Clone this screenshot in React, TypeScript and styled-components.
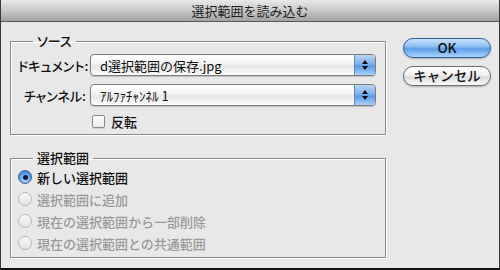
import * as React from "react";
import styled, { createGlobalStyle } from "styled-components";

const GlobalStyle = createGlobalStyle`
  html, body { margin: 0; padding: 0; background: #e8e8e8; }
  body {
    font-family: "Noto Sans CJK JP", "Noto Sans", sans-serif;
    font-feature-settings: "palt";
  }
`;

const Window = styled.div`
  width: 500px;
  height: 270px;
  box-sizing: border-box;
  background: #e8e8e8;
  border-left: 1px solid #3a3a3a;
  border-right: 1px solid #3a3a3a;
  border-bottom: 2px solid #111;
  display: flex;
  flex-direction: column;
  color: #111;
  font-size: 13px;
`;

const TitleBar = styled.div`
  height: 21px;
  flex-shrink: 0;
  background: linear-gradient(#e9e9e9, #c8c8c8 50%, #a2a2a2);
  border-bottom: 1px solid #5a5a5a;
  display: flex;
  align-items: center;
  justify-content: center;
  font-size: 13px;
  color: #1e1e1e;
  line-height: 1;
  font-feature-settings: normal;
`;

const Body = styled.div`
  display: flex;
  padding: 11px 0 0 9px;
  gap: 17px;
`;

const LeftColumn = styled.div`
  width: 376px;
  display: flex;
  flex-direction: column;
  gap: 15px;
`;

const GroupBox = styled.fieldset<{ $bottom: number }>`
  margin: 0;
  padding: 5px 8px ${p => p.$bottom}px 7px;
  border: 1px solid #8a8a8a;
  box-shadow: 1px 1px 0 #fff, inset 1px 1px 0 #fff;
  min-width: 0;
`;

const GroupLegend = styled.legend`
  margin-left: 15px;
  padding: 0 4px;
  font-size: 13px;
  line-height: 16px;
  font-weight: 500;
`;

const FormGrid = styled.div`
  display: grid;
  grid-template-columns: 68px 286px;
  column-gap: 4px;
  row-gap: 8px;
  align-items: center;
`;

const FieldLabel = styled.div`
  text-align: right;
  white-space: nowrap;
  font-weight: 500;
`;

const PopupBox = styled.div`
  height: 22px;
  box-sizing: border-box;
  border: 1px solid #7c7c7c;
  border-radius: 4px;
  background: linear-gradient(#ffffff, #f3f3f3 45%, #e6e6e6 55%, #fdfdfd);
  box-shadow: 0 1px 1px rgba(0, 0, 0, 0.18);
  display: flex;
  align-items: stretch;
  overflow: hidden;
`;

const PopupValue = styled.div`
  flex: 1;
  display: flex;
  align-items: center;
  padding-left: 9px;
  font-size: 13px;
  font-feature-settings: normal;
  white-space: nowrap;
`;

const Stepper = styled.div`
  width: 20px;
  border-left: 1px solid #5f87b8;
  background: linear-gradient(#b7d5f5, #7fb0ea 45%, #5d98e4 55%, #a9d2fb);
  display: flex;
  flex-direction: column;
  align-items: center;
  justify-content: center;
  gap: 2px;
`;

const StepArrow = styled.div<{ $down?: boolean }>`
  width: 0;
  height: 0;
  border-left: 3px solid transparent;
  border-right: 3px solid transparent;
  ${p => (p.$down ? "border-top: 4px solid #111;" : "border-bottom: 4px solid #111;")}
`;

const CheckRow = styled.label`
  grid-column: 2;
  display: flex;
  align-items: center;
  gap: 6px;
  margin-left: 2px;
  height: 14px;
  font-weight: 500;
`;

const CheckBox = styled.span`
  width: 13px;
  height: 13px;
  box-sizing: border-box;
  border: 1px solid #8a8a8a;
  border-radius: 2px;
  background: linear-gradient(#fbfbfb, #ececec);
  box-shadow: 0 1px 1px rgba(0, 0, 0, 0.12);
`;

const RadioList = styled.div`
  display: flex;
  flex-direction: column;
  margin-top: -5px;
`;

const RadioRow = styled.div<{ $disabled?: boolean }>`
  height: 22px;
  display: flex;
  align-items: center;
  gap: 5px;
  font-size: 13px;
  color: ${p => (p.$disabled ? "#9a9a9a" : "#111")};
  font-weight: 500;
  font-feature-settings: normal;
`;

const RadioDot = styled.span<{ $checked?: boolean; $disabled?: boolean }>`
  width: 14px;
  height: 14px;
  flex-shrink: 0;
  box-sizing: border-box;
  border-radius: 50%;
  display: flex;
  align-items: center;
  justify-content: center;
  border: 1px solid ${p => (p.$checked ? "#3c5f92" : p.$disabled ? "#b8b8b8" : "#8a8a8a")};
  background: ${p =>
    p.$checked
      ? "radial-gradient(circle at 50% 70%, #bfe2ff, #5a9ae6 55%, #3a78c8)"
      : "linear-gradient(#f7f7f7, #e4e4e4)"};
  &::after {
    content: "";
    display: ${p => (p.$checked ? "block" : "none")};
    width: 5px;
    height: 5px;
    border-radius: 50%;
    background: #0d1c33;
  }
`;

const ButtonColumn = styled.div`
  display: flex;
  flex-direction: column;
  gap: 8px;
  padding-top: 5px;
`;

const AquaButton = styled.button<{ $primary?: boolean }>`
  width: 88px;
  height: 20px;
  box-sizing: border-box;
  border-radius: 10px;
  font-family: inherit;
  font-size: 13.5px;
  font-weight: 500;
  color: #111;
  padding: 0;
  line-height: 1;
  border: 1px solid ${p => (p.$primary ? "#2f5f9e" : "#6e6e6e")};
  background: ${p =>
    p.$primary
      ? "linear-gradient(#c9e3fb, #8fc0f2 40%, #5d9ee9 55%, #a9d6ff)"
      : "linear-gradient(#ffffff, #f1f1f1 45%, #dcdcdc 55%, #fafafa)"};
  box-shadow: 0 1px 2px rgba(0, 0, 0, 0.25);
`;

const radioItems = [
  { label: "新しい選択範囲", checked: true },
  { label: "選択範囲に追加", disabled: true },
  { label: "現在の選択範囲から一部削除", disabled: true },
  { label: "現在の選択範囲との共通範囲", disabled: true },
];

const PopupButton = ({ value }: { value: string }) => (
  <PopupBox>
    <PopupValue>{value}</PopupValue>
    <Stepper>
      <StepArrow />
      <StepArrow $down />
    </Stepper>
  </PopupBox>
);

const App = () => {
  return (
    <>
      <GlobalStyle />
      <Window>
        <TitleBar>選択範囲を読み込む</TitleBar>
        <Body>
          <LeftColumn>
            <GroupBox $bottom={6}>
              <GroupLegend>ソース</GroupLegend>
              <FormGrid>
                <FieldLabel>ドキュメント:</FieldLabel>
                <PopupButton value="d選択範囲の保存.jpg" />
                <FieldLabel>チャンネル:</FieldLabel>
                <PopupButton value="ｱﾙﾌｧﾁｬﾝﾈﾙ 1" />
                <CheckRow>
                  <CheckBox />
                  反転
                </CheckRow>
              </FormGrid>
            </GroupBox>
            <GroupBox $bottom={3}>
              <GroupLegend>選択範囲</GroupLegend>
              <RadioList>
                {radioItems.map(item => (
                  <RadioRow key={item.label} $disabled={item.disabled}>
                    <RadioDot $checked={item.checked} $disabled={item.disabled} />
                    {item.label}
                  </RadioRow>
                ))}
              </RadioList>
            </GroupBox>
          </LeftColumn>
          <ButtonColumn>
            <AquaButton $primary>OK</AquaButton>
            <AquaButton>キャンセル</AquaButton>
          </ButtonColumn>
        </Body>
      </Window>
    </>
  );
};

export default App;
